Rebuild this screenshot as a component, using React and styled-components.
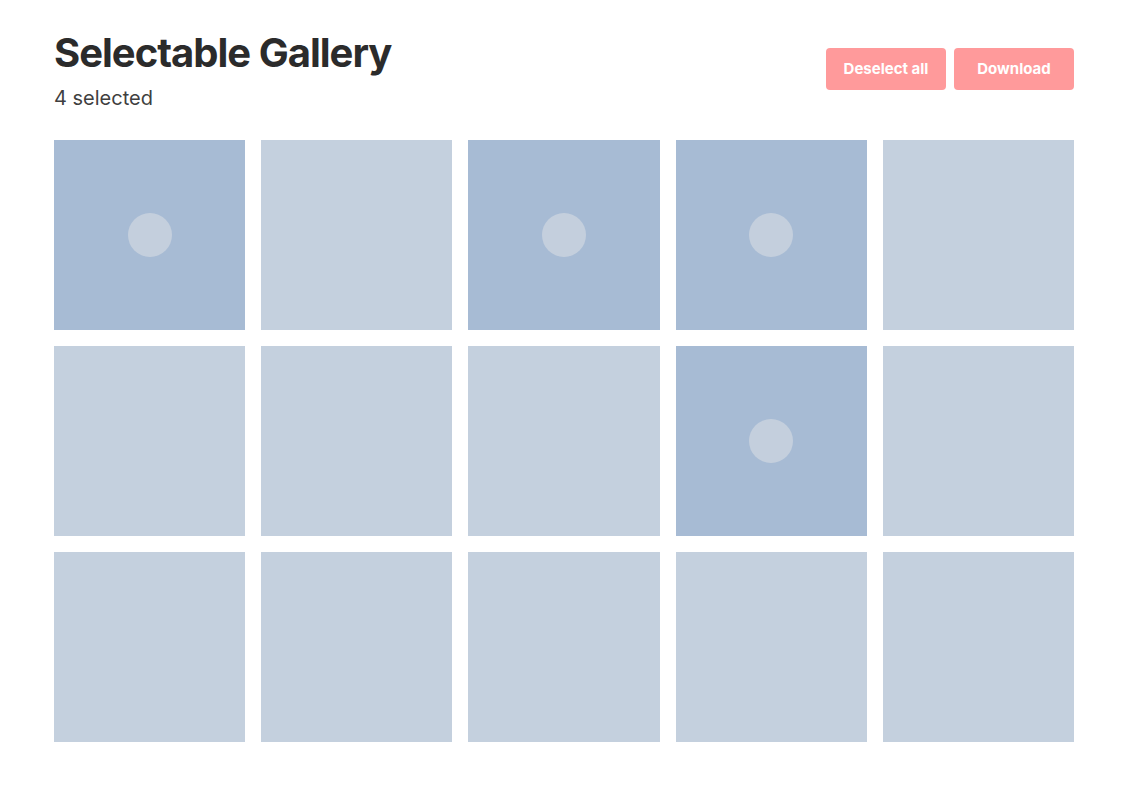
import React, { useState } from "react";
import styled, { createGlobalStyle } from "styled-components";

const Global = createGlobalStyle`
  html, body { margin: 0; padding: 0; background: #ffffff; }
  body { font-family: Inter, "Noto Sans", sans-serif; color: #2b2b2b; }
  * { box-sizing: border-box; }
`;

const Page = styled.div`
  width: 1020px;
  margin-left: 54px;
  padding-top: 29px;
`;

const Header = styled.header`
  display: flex;
  justify-content: space-between;
  align-items: center;
  margin-bottom: 27px;
`;

const TitleBlock = styled.div`
  display: flex;
  flex-direction: column;
  gap: 6px;
`;

const Title = styled.h1`
  margin: 0;
  font-size: 40px;
  line-height: 48px;
  font-weight: 700;
  color: #2b2b2b;
  letter-spacing: -1px;
`;

const Count = styled.div`
  font-size: 20px;
  line-height: 30px;
  color: #3f3f3f;
`;

const Actions = styled.div`
  display: flex;
  gap: 8px;
  margin-top: -5px;
`;

const Button = styled.button`
  width: 120px;
  height: 42px;
  border: none;
  border-radius: 4px;
  background: #ff9a9b;
  color: #ffffff;
  font-family: Inter, "Noto Sans", sans-serif;
  font-size: 15px;
  font-weight: 700;
  cursor: pointer;
`;

const Grid = styled.div`
  display: grid;
  grid-template-columns: repeat(5, 1fr);
  grid-auto-rows: 190px;
  gap: 16px;
`;

const Tile = styled.div`
  background: ${(p) => (p.$selected ? "#a7bbd4" : "#c4d0de")};
  display: flex;
  align-items: center;
  justify-content: center;
  cursor: pointer;
`;

const Dot = styled.span`
  width: 44px;
  height: 44px;
  border-radius: 50%;
  background: #c4cfdd;
`;

export default function App() {
  const [selected, setSelected] = useState(new Set([0, 2, 3, 8]));
  const toggle = (i) => {
    const next = new Set(selected);
    next.has(i) ? next.delete(i) : next.add(i);
    setSelected(next);
  };
  return (
    <>
      <Global />
      <Page>
        <Header>
          <TitleBlock>
            <Title>Selectable Gallery</Title>
            <Count>{selected.size} selected</Count>
          </TitleBlock>
          <Actions>
            <Button onClick={() => setSelected(new Set())}>Deselect all</Button>
            <Button>Download</Button>
          </Actions>
        </Header>
        <Grid>
          {Array.from({ length: 15 }, (_, i) => (
            <Tile key={i} $selected={selected.has(i)} onClick={() => toggle(i)}>
              {selected.has(i) && <Dot />}
            </Tile>
          ))}
        </Grid>
      </Page>
    </>
  );
}
